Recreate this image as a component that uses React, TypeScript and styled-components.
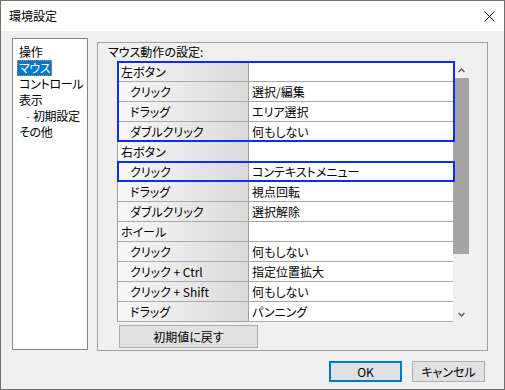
import React from "react";
import styled, { createGlobalStyle } from "styled-components";

const GlobalStyle = createGlobalStyle`
  html, body { margin: 0; padding: 0; background: #ffffff; }
  body {
    font-family: "Noto Sans CJK JP", "Noto Sans", sans-serif;
    font-size: 12px;
    font-feature-settings: "palt";
    color: #000;
  }
  * { box-sizing: border-box; }
`;

const Window = styled.div`
  width: 505px;
  height: 390px;
  border: 1px solid #707070;
  display: flex;
  flex-direction: column;
  background: #f0f0f0;
`;

const TitleBar = styled.div`
  height: 30px;
  flex: none;
  background: #ffffff;
  display: flex;
  align-items: center;
  justify-content: space-between;
  padding: 0 9px 0 8px;
  font-size: 12px;
  line-height: 16px;
`;

const CloseIcon = styled.svg`
  width: 11px;
  height: 11px;
  display: block;
`;

const Body = styled.div`
  flex: 1;
  display: flex;
  flex-direction: column;
  padding: 7px 16px 7px 11px;
`;

const Main = styled.div`
  display: flex;
  align-items: flex-start;
  gap: 9px;
`;

const ListBox = styled.div`
  width: 76px;
  height: 312px;
  border: 1px solid #828790;
  background: #ffffff;
  padding: 5px 0 0 4px;
  display: flex;
  flex-direction: column;
  overflow: hidden;
`;

const ListItem = styled.div<{ $selected?: boolean; $indent?: boolean }>`
  align-self: flex-start;
  height: 16px;
  line-height: 14px;
  padding: 0 1px;
  white-space: nowrap;
  letter-spacing: -0.3px;
  margin-left: ${(p) => (p.$indent ? "7px" : "0")};
  border: 1px solid transparent;
  ${(p) =>
    p.$selected
      ? `background: #0078d7; color: #ffffff; border: 1px dotted #e08a2a;`
      : ""}
`;

const Dash = styled.span`
  color: #3060c0;
  margin-right: 3px;
`;

const Panel = styled.div`
  margin-top: 4px;
  width: 391px;
  height: 309px;
  border: 1px solid #a0a0a0;
  padding: 1px 0 0 10px;
  display: flex;
  flex-direction: column;
`;

const PanelLabel = styled.div`
  line-height: 16px;
  height: 16px;
  margin-bottom: 2px;
`;

const TableArea = styled.div`
  position: relative;
  margin-left: 9px;
  width: 352px;
  height: 260px;
  display: flex;
`;

const Grid = styled.div`
  flex: 1;
  background: #ffffff;
  border-left: 1px solid #a0a0a0;
  display: flex;
  flex-direction: column;
`;

const Row = styled.div`
  height: 20px;
  flex: none;
  display: grid;
  grid-template-columns: 131px 1fr;
  border-bottom: 1px solid #a8a8a8;
  line-height: 19px;
`;

const NameCell = styled.div<{ $child?: boolean }>`
  background: linear-gradient(to right, #f8f8f8, #dadada);
  border-right: 1px solid #a0a0a0;
  padding-left: ${(p) => (p.$child ? "12px" : "3px")};
  white-space: nowrap;
`;

const ValueCell = styled.div`
  padding-left: 3px;
  white-space: nowrap;
`;

const SelectionBox = styled.div`
  position: absolute;
  left: 0;
  width: 338px;
  border: 2px solid #0a2cff;
  pointer-events: none;
`;

const ScrollBar = styled.div`
  width: 16px;
  flex: none;
  background: #f0f0f0;
  display: flex;
  flex-direction: column;
`;

const ScrollButton = styled.div`
  height: 16px;
  flex: none;
  display: flex;
  align-items: center;
  justify-content: center;
`;

const ScrollThumb = styled.div`
  height: 176px;
  flex: none;
  background: #a6a6a6;
`;

const ScrollSpacer = styled.div`
  flex: 1;
`;

const Button = styled.button<{ $default?: boolean }>`
  font-family: inherit;
  font-size: 12px;
  font-feature-settings: "palt";
  color: #000;
  background: #e1e1e1;
  border: ${(p) => (p.$default ? "2px solid #0078d7" : "1px solid #adadad")};
  padding: 0;
  margin: 0;
  line-height: 16px;
  display: flex;
  align-items: center;
  justify-content: center;
`;

const ResetButton = styled(Button)`
  margin-top: 3px;
  margin-left: 11px;
  width: 139px;
  height: 23px;
`;

const Footer = styled.div`
  margin-top: 10px;
  padding-right: 3px;
  display: flex;
  justify-content: flex-end;
  gap: 10px;
`;

const DialogButton = styled(Button)`
  width: 73px;
  height: 21px;
`;

type Item = { name: string; value: string; child: boolean };

const rows: Item[] = [
  { name: "左ボタン", value: "", child: false },
  { name: "クリック", value: "選択/編集", child: true },
  { name: "ドラッグ", value: "エリア選択", child: true },
  { name: "ダブルクリック", value: "何もしない", child: true },
  { name: "右ボタン", value: "", child: false },
  { name: "クリック", value: "コンテキストメニュー", child: true },
  { name: "ドラッグ", value: "視点回転", child: true },
  { name: "ダブルクリック", value: "選択解除", child: true },
  { name: "ホイール", value: "", child: false },
  { name: "クリック", value: "何もしない", child: true },
  { name: "クリック + Ctrl", value: "指定位置拡大", child: true },
  { name: "クリック + Shift", value: "何もしない", child: true },
  { name: "ドラッグ", value: "パンニング", child: true },
];

const selections = [
  { start: 0, count: 4 },
  { start: 5, count: 1 },
];

const Chevron = ({ down }: { down?: boolean }) => (
  <svg width="7" height="5" viewBox="0 0 7 5">
    <path
      d={down ? "M0.5 1 L3.5 4 L6.5 1" : "M0.5 4 L3.5 1 L6.5 4"}
      fill="none"
      stroke="#606060"
      strokeWidth="1.5"
    />
  </svg>
);

export default function App() {
  return (
    <>
      <GlobalStyle />
      <Window>
        <TitleBar>
          <span>環境設定</span>
          <CloseIcon viewBox="0 0 11 11">
            <path d="M0.5 0.5 L10.5 10.5 M10.5 0.5 L0.5 10.5" stroke="#000" strokeWidth="1" fill="none" />
          </CloseIcon>
        </TitleBar>
        <Body>
          <Main>
            <ListBox>
              <ListItem>操作</ListItem>
              <ListItem $selected>マウス</ListItem>
              <ListItem>コントロール</ListItem>
              <ListItem>表示</ListItem>
              <ListItem $indent>
                <Dash>-</Dash>初期設定
              </ListItem>
              <ListItem>その他</ListItem>
            </ListBox>
            <Panel>
              <PanelLabel>マウス動作の設定:</PanelLabel>
              <TableArea>
                <Grid>
                  {rows.map((r, i) => (
                    <Row key={i}>
                      <NameCell $child={r.child}>{r.name}</NameCell>
                      <ValueCell>{r.value}</ValueCell>
                    </Row>
                  ))}
                </Grid>
                <ScrollBar>
                  <ScrollButton>
                    <Chevron />
                  </ScrollButton>
                  <ScrollThumb />
                  <ScrollSpacer />
                  <ScrollButton>
                    <Chevron down />
                  </ScrollButton>
                </ScrollBar>
                {selections.map((s, i) => (
                  <SelectionBox
                    key={i}
                    style={{ top: s.start * 20 - 1, height: s.count * 20 + 1 }}
                  />
                ))}
              </TableArea>
              <ResetButton>初期値に戻す</ResetButton>
            </Panel>
          </Main>
          <Footer>
            <DialogButton $default>OK</DialogButton>
            <DialogButton>キャンセル</DialogButton>
          </Footer>
        </Body>
      </Window>
    </>
  );
}
